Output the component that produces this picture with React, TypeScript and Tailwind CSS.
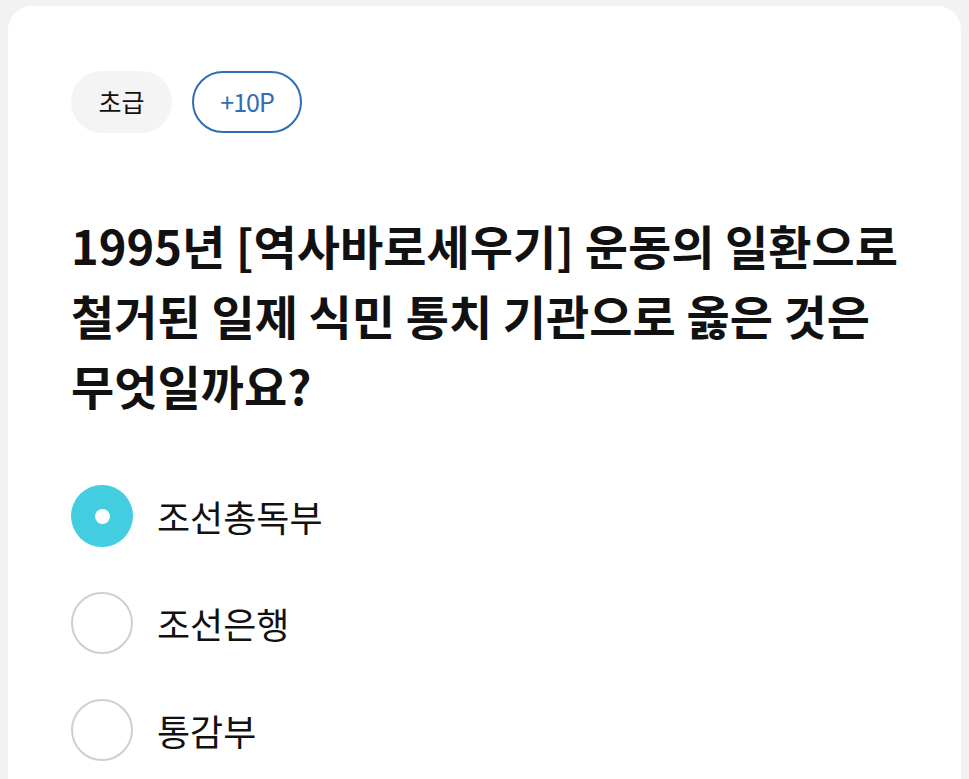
import { useState } from "react";

const options = ["조선총독부", "조선은행", "통감부"];

export default function App() {
  const [selected, setSelected] = useState(0);

  return (
    <div
      className="min-h-screen bg-[#f2f2f2] px-2 pt-1.5"
      style={{ fontFamily: '"Noto Sans CJK KR", "Noto Sans", sans-serif' }}
    >
      <div className="h-[773px] overflow-hidden rounded-t-[24px] bg-white pl-[63px] pr-6 pt-[65px]">
        {/* badges */}
        <div className="flex items-center gap-5">
          <span className="flex h-[62px] w-[101px] items-center justify-center rounded-full bg-[#f4f4f4] text-[25px] text-[#111]">
            초급
          </span>
          <span className="flex h-[62px] w-[110px] items-center justify-center rounded-full border-2 border-[#2f6db5] text-[25px] tracking-[-1px] text-[#2f6db5]">
            +10P
          </span>
        </div>

        <h1 className="mt-[77px] whitespace-nowrap text-[47px] font-bold leading-[70px] text-[#111]">
          1995년 [역사바로세우기] 운동의 일환으로
          <br />
          철거된 일제 식민 통치 기관으로 옳은 것은
          <br />
          무엇일까요?
        </h1>

        <div className="mt-[65px] flex flex-col gap-[45px]">
          {options.map((opt, i) => (
            <button
              key={opt}
              onClick={() => setSelected(i)}
              className="flex items-center gap-6 text-left"
            >
              {selected === i ? (
                <span className="flex h-[62px] w-[62px] items-center justify-center rounded-full bg-[#42cde0]">
                  <span className="h-[15px] w-[15px] rounded-full bg-white" />
                </span>
              ) : (
                <span className="h-[62px] w-[62px] rounded-full border-2 border-[#cfcfcf]" />
              )}
              <span className="text-[36px] text-[#111]">{opt}</span>
            </button>
          ))}
        </div>
      </div>
    </div>
  );
}
